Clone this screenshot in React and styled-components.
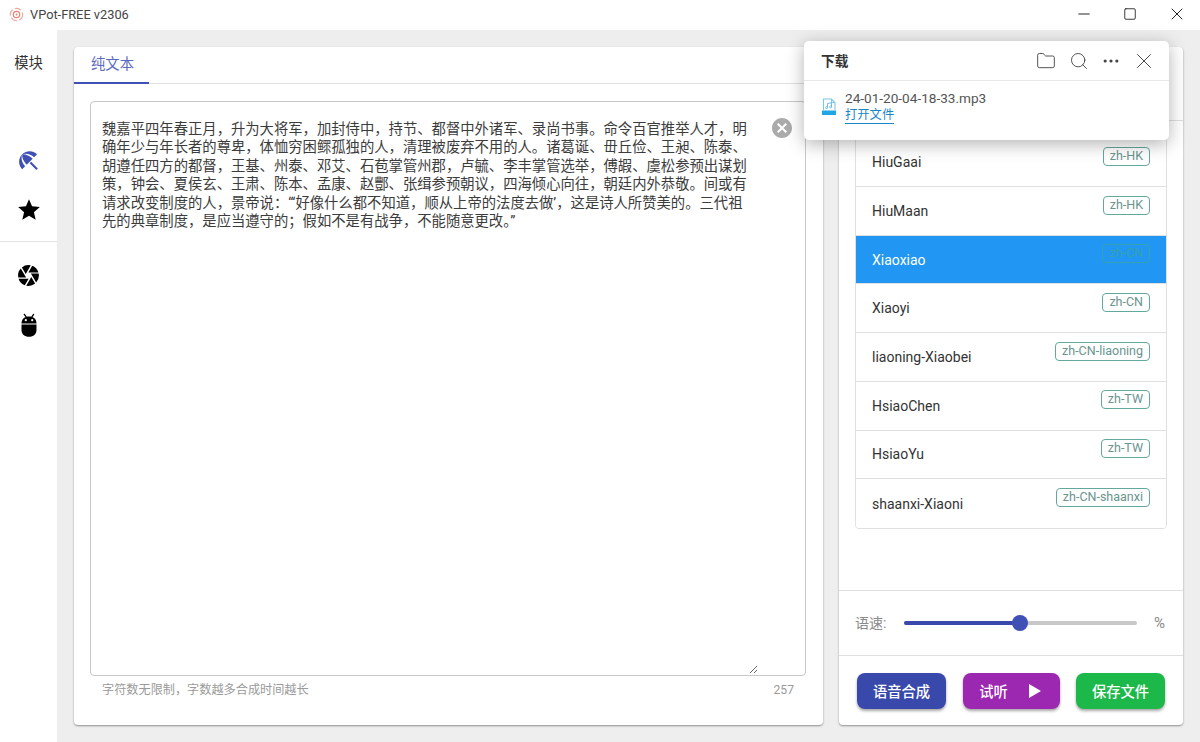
import React from 'react';
import styled, { createGlobalStyle } from 'styled-components';
import { MdBeachAccess, MdStar, MdCamera, MdCancel } from 'react-icons/md';
import { Folder, Search, MoreHorizontal, X, Minus, Square } from 'lucide-react';

const FONT = `Roboto, "Noto Sans CJK SC", sans-serif`;

const voices = [
  { name: 'HiuGaai', tag: 'zh-HK' },
  { name: 'HiuMaan', tag: 'zh-HK' },
  { name: 'Xiaoxiao', tag: 'zh-CN', active: true },
  { name: 'Xiaoyi', tag: 'zh-CN' },
  { name: 'liaoning-Xiaobei', tag: 'zh-CN-liaoning' },
  { name: 'HsiaoChen', tag: 'zh-TW' },
  { name: 'HsiaoYu', tag: 'zh-TW' },
  { name: 'shaanxi-Xiaoni', tag: 'zh-CN-shaanxi' },
];

const sampleText =
  '魏嘉平四年春正月，升为大将军，加封侍中，持节、都督中外诸军、录尚书事。命令百官推举人才，明确年少与年长者的尊卑，体恤穷困鳏孤独的人，清理被废弃不用的人。诸葛诞、毌丘俭、王昶、陈泰、胡遵任四方的都督，王基、州泰、邓艾、石苞掌管州郡，卢毓、李丰掌管选举，傅嘏、虞松参预出谋划策，钟会、夏侯玄、王肃、陈本、孟康、赵酆、张缉参预朝议，四海倾心向往，朝廷内外恭敬。间或有请求改变制度的人，景帝说：“‘好像什么都不知道，顺从上帝的法度去做’，这是诗人所赞美的。三代祖先的典章制度，是应当遵守的；假如不是有战争，不能随意更改。”';

function AppLogo() {
  return (
    <svg width="15" height="15" viewBox="0 0 16 16" fill="none">
      <circle cx="8" cy="8" r="6.6" stroke="#efa79b" strokeWidth="1.2" strokeDasharray="7 2.5" />
      <circle cx="8" cy="8" r="3.4" stroke="#e87f70" strokeWidth="1.3" />
      <circle cx="8" cy="8" r="1" fill="#e87f70" />
    </svg>
  );
}

function BugIcon() {
  return (
    <svg width="24" height="26" viewBox="0 0 24 26">
      <path d="M7.4 2.4 L9.4 5.4 M16.6 2.4 L14.6 5.4" stroke="#000" strokeWidth="1.3" strokeLinecap="round" />
      <path d="M4.5 11.4 C4.5 7 7.6 4.4 12 4.4 C16.4 4.4 19.5 7 19.5 11.4 Z" fill="#000" />
      <circle cx="8.8" cy="8.2" r="1.1" fill="#fff" />
      <circle cx="15.2" cy="8.2" r="1.1" fill="#fff" />
      <path d="M4.5 12.4 H19.5 V18 C19.5 22 16.4 24.8 12 24.8 C7.6 24.8 4.5 22 4.5 18 Z" fill="#000" />
    </svg>
  );
}

function AudioFileIcon() {
  return (
    <svg width="14" height="18" viewBox="0 0 14 18" fill="none">
      <path d="M1.5 12 V1 H9.5 L13 4.5 V12" stroke="#7cc6ee" strokeWidth="1.1" />
      <path d="M9.5 1 V4.5 H13" stroke="#7cc6ee" strokeWidth="1" />
      <path d="M5.5 9.5 V5.5 L9.5 4.8 V8.8" stroke="#5ab6e8" strokeWidth="0.9" />
      <circle cx="4.6" cy="9.6" r="1" stroke="#5ab6e8" strokeWidth="0.8" />
      <circle cx="8.6" cy="8.9" r="1" stroke="#5ab6e8" strokeWidth="0.8" />
      <rect x="0" y="12.5" width="14" height="4.5" fill="#1ea7e4" />
    </svg>
  );
}

export default function App() {
  return (
    <>
      <GlobalStyle />
      <Window>
        <TitleBar>
          <TitleLeft>
            <AppLogo />
            <span>VPot-FREE v2306</span>
          </TitleLeft>
          <WindowControls>
            <Minus size={18} strokeWidth={1.3} />
            <Square size={14} strokeWidth={1.5} />
            <X size={20} strokeWidth={1.2} />
          </WindowControls>
        </TitleBar>
        <Body>
          <Sidebar>
            <SideTitle>模块</SideTitle>
            <SideGroup>
              <SideIcon $color="#3f51b5"><MdBeachAccess size={25} /></SideIcon>
              <SideIcon><MdStar size={26} /></SideIcon>
            </SideGroup>
            <SideDivider />
            <SideIcon><MdCamera size={25} /></SideIcon>
            <SideIcon><BugIcon /></SideIcon>
          </Sidebar>
          <Main>
            <EditorCard>
              <Tabs>
                <Tab>纯文本</Tab>
              </Tabs>
              <EditorBody>
                <TextBox>
                  <Editor defaultValue={sampleText} spellCheck={false} />
                  <ClearButton><MdCancel size={24} /></ClearButton>
                </TextBox>
                <Hint>
                  <span>字符数无限制，字数越多合成时间越长</span>
                  <span>257</span>
                </Hint>
              </EditorBody>
            </EditorCard>
            <VoiceCard>
              <VoiceHead />
              <VoiceSection>
                <VoiceList>
                  {voices.map((v) => (
                    <VoiceRow key={v.name} $active={v.active}>
                      <span>{v.name}</span>
                      <VoiceTag $active={v.active}>{v.tag}</VoiceTag>
                    </VoiceRow>
                  ))}
                </VoiceList>
              </VoiceSection>
              <SpeedRow>
                <SpeedLabel>语速:</SpeedLabel>
                <SliderTrack>
                  <SliderFill style={{ width: '50%' }} />
                  <SliderThumb />
                </SliderTrack>
                <SpeedUnit>%</SpeedUnit>
              </SpeedRow>
              <Actions>
                <ActionButton $bg="#3949ab" $width={89}>语音合成</ActionButton>
                <ActionButton $bg="#9c27b0" $width={97} $trim={2}>
                  试听
                  <PlayShape />
                </ActionButton>
                <ActionButton $bg="#1db84a" $width={89}>保存文件</ActionButton>
              </Actions>
            </VoiceCard>
          </Main>
          <DownloadPopup>
            <PopupHead>
              <PopupTitle>下载</PopupTitle>
              <PopupTools>
                <PopupTool><Folder size={20} strokeWidth={1.1} /></PopupTool>
                <PopupTool><Search size={20} strokeWidth={1.1} /></PopupTool>
                <PopupTool><MoreHorizontal size={20} strokeWidth={1.8} /></PopupTool>
                <PopupTool><X size={26} strokeWidth={0.9} /></PopupTool>
              </PopupTools>
            </PopupHead>
            <PopupItem>
              <AudioFileIcon />
              <FileInfo>
                <FileName>24-01-20-04-18-33.mp3</FileName>
                <FileLink>打开文件</FileLink>
              </FileInfo>
            </PopupItem>
          </DownloadPopup>
        </Body>
      </Window>
    </>
  );
}

const GlobalStyle = createGlobalStyle`
  html, body {
    margin: 0;
    padding: 0;
    background: #fff;
    font-family: ${FONT};
  }
  * {
    box-sizing: border-box;
  }
`;

const Window = styled.div`
  width: 1200px;
  height: 742px;
  display: flex;
  flex-direction: column;
  overflow: hidden;
  background: #fff;
  color: #333;
`;

const TitleBar = styled.div`
  height: 30px;
  flex: none;
  display: flex;
  align-items: center;
  justify-content: space-between;
  padding-bottom: 2px;
  background: #fff;
`;

const TitleLeft = styled.div`
  display: flex;
  align-items: center;
  gap: 6px;
  padding-left: 9px;
  font-size: 12.8px;
  color: #444;
`;

const WindowControls = styled.div`
  display: flex;
  align-items: center;
  gap: 30px;
  padding-right: 13.5px;
  color: #222;
`;

const Body = styled.div`
  flex: 1;
  display: flex;
  position: relative;
  min-height: 0;
`;

const Sidebar = styled.div`
  width: 57px;
  flex: none;
  display: flex;
  flex-direction: column;
  align-items: center;
  background: #fff;
`;

const SideTitle = styled.div`
  margin-top: 24px;
  font-size: 14.33px;
  line-height: 18px;
  color: #333;
`;

const SideGroup = styled.div`
  margin-top: 64px;
`;

const SideIcon = styled.div`
  width: 57px;
  height: 49px;
  display: flex;
  align-items: center;
  justify-content: center;
  color: ${(p) => p.$color || '#000'};
`;

const SideDivider = styled.div`
  width: 100%;
  height: 1px;
  margin: 7px 0 9px;
  background: #e2e2e2;
`;

const Main = styled.div`
  flex: 1;
  display: flex;
  gap: 16px;
  padding: 17px;
  background: #eeeeee;
  min-width: 0;
`;

const Card = styled.div`
  background: #fff;
  border-radius: 4px;
  box-shadow: 0 1px 2px rgba(0, 0, 0, 0.4);
  display: flex;
  flex-direction: column;
`;

const EditorCard = styled(Card)`
  width: 749px;
  flex: none;
`;

const Tabs = styled.div`
  height: 37px;
  flex: none;
  display: flex;
  border-bottom: 1px solid #e0e0e0;
`;

const Tab = styled.div`
  width: 75px;
  height: 37px;
  padding-left: 17px;
  font-size: 14.33px;
  line-height: 35px;
  color: #5c6bc0;
  border-bottom: 2px solid #3f51b5;
`;

const EditorBody = styled.div`
  flex: 1;
  display: flex;
  flex-direction: column;
  padding: 17px 17px 0 16px;
  min-height: 0;
`;

const TextBox = styled.div`
  height: 575px;
  position: relative;
  flex: none;
  display: flex;
  border: 1px solid #c8c8c8;
  border-radius: 4px;
  background: #fff;
`;

const Editor = styled.textarea`
  width: 667px;
  height: 572px;
  padding: 18px 11px 10px 11px;
  border: none;
  outline: none;
  resize: vertical;
  font-family: ${FONT};
  font-size: 14.33px;
  line-height: 18.4px;
  color: #3c3c3c;
  background: transparent;
`;

const ClearButton = styled.div`
  position: absolute;
  top: 14px;
  right: 11px;
  display: flex;
  color: #ababab;
`;

const Hint = styled.div`
  display: flex;
  justify-content: space-between;
  padding: 7px 12px 0 12px;
  font-size: 12.17px;
  line-height: 15px;
  color: #9a9a9a;
`;

const VoiceCard = styled(Card)`
  flex: 1;
  min-width: 0;
`;

const VoiceHead = styled.div`
  height: 74px;
  flex: none;
  border-bottom: 1px solid #e0e0e0;
`;

const VoiceSection = styled.div`
  flex: 1;
  padding: 16.4px 16px 0;
  min-height: 0;
`;

const VoiceList = styled.div`
  border: 1px solid #e0e0e0;
  border-radius: 4px;
  overflow: hidden;
`;

const VoiceRow = styled.div`
  height: 48.7px;
  display: flex;
  justify-content: space-between;
  align-items: center;
  padding: 0 16px;
  font-size: 14px;
  border-bottom: 1px solid #e0e0e0;
  background: ${(p) => (p.$active ? '#2196f3' : '#fff')};
  color: ${(p) => (p.$active ? '#fff' : '#333')};

  &:last-child {
    border-bottom: none;
  }
`;

const VoiceTag = styled.span`
  align-self: flex-start;
  margin-top: 8.5px;
  height: 19px;
  padding: 0 6px;
  border: 1px solid ${(p) => (p.$active ? '#33a3ad' : '#63a89d')};
  border-radius: 4px;
  font-size: 12.5px;
  line-height: 16px;
  color: ${(p) => (p.$active ? '#33a3ad' : '#6a948e')};
`;

const SpeedRow = styled.div`
  height: 66px;
  flex: none;
  display: flex;
  align-items: center;
  padding: 0 16px;
  border-top: 1px solid #e0e0e0;
  border-bottom: 1px solid #e0e0e0;
  gap: 16px;
`;

const SpeedLabel = styled.span`
  width: 33px;
  padding-bottom: 3px;
  font-size: 14px;
  color: #8a8a8a;
`;

const SpeedUnit = styled.span`
  margin-left: 1px;
  font-size: 15px;
  color: #8a8a8a;
`;

const SliderTrack = styled.div`
  width: 233px;
  flex: none;
  height: 4px;
  border-radius: 2px;
  background: #c8c8c8;
  display: flex;
  align-items: center;
`;

const SliderFill = styled.div`
  height: 4px;
  border-radius: 2px;
  background: #3949ab;
`;

const SliderThumb = styled.div`
  width: 16px;
  height: 16px;
  flex: none;
  border-radius: 50%;
  margin-left: -9px;
  background: #3f51b5;
`;

const Actions = styled.div`
  flex: none;
  height: 69px;
  display: flex;
  align-items: flex-start;
  justify-content: space-between;
  padding: 17px 18px 0;
`;

const ActionButton = styled.div`
  width: ${(p) => p.$width}px;
  height: 36px;
  display: flex;
  align-items: center;
  justify-content: center;
  gap: 21px;
  padding: 0 ${(p) => p.$trim || 0}px 2px 0;
  border-radius: 8px;
  background: ${(p) => p.$bg};
  color: #fff;
  font-size: 14.3px;
  font-weight: 500;
  box-shadow: 0 2px 3px rgba(0, 0, 0, 0.35);
`;

const PlayShape = styled.i`
  display: block;
  width: 0;
  height: 0;
  margin-top: 2px;
  border-style: solid;
  border-width: 7px 0 7px 12px;
  border-color: transparent transparent transparent #fff;
`;

const DownloadPopup = styled.div`
  position: absolute;
  left: 804px;
  top: 11px;
  width: 365px;
  height: 99px;
  background: #fff;
  border-radius: 5px;
  box-shadow: 0 4px 18px rgba(0, 0, 0, 0.3);
`;

const PopupHead = styled.div`
  height: 40px;
  display: flex;
  align-items: center;
  justify-content: space-between;
  padding: 0 9px 0 17px;
  border-bottom: 1px solid #e8e8e8;
`;

const PopupTitle = styled.div`
  padding-bottom: 2px;
  font-size: 13.7px;
  font-weight: 700;
  color: #333;
`;

const PopupTools = styled.div`
  display: flex;
  align-items: center;
  color: #444;
`;

const PopupTool = styled.div`
  width: 32.5px;
  display: flex;
  justify-content: center;
`;

const PopupItem = styled.div`
  display: flex;
  align-items: center;
  gap: 9px;
  padding: 9px 17px 0 18px;
`;

const FileInfo = styled.div`
  display: flex;
  flex-direction: column;
  align-items: flex-start;
`;

const FileName = styled.div`
  font-size: 13.6px;
  line-height: 17px;
  color: #555;
`;

const FileLink = styled.div`
  font-size: 12.3px;
  line-height: 16px;
  color: #1a86c7;
  border-bottom: 1px solid #1a86c7;
`;
